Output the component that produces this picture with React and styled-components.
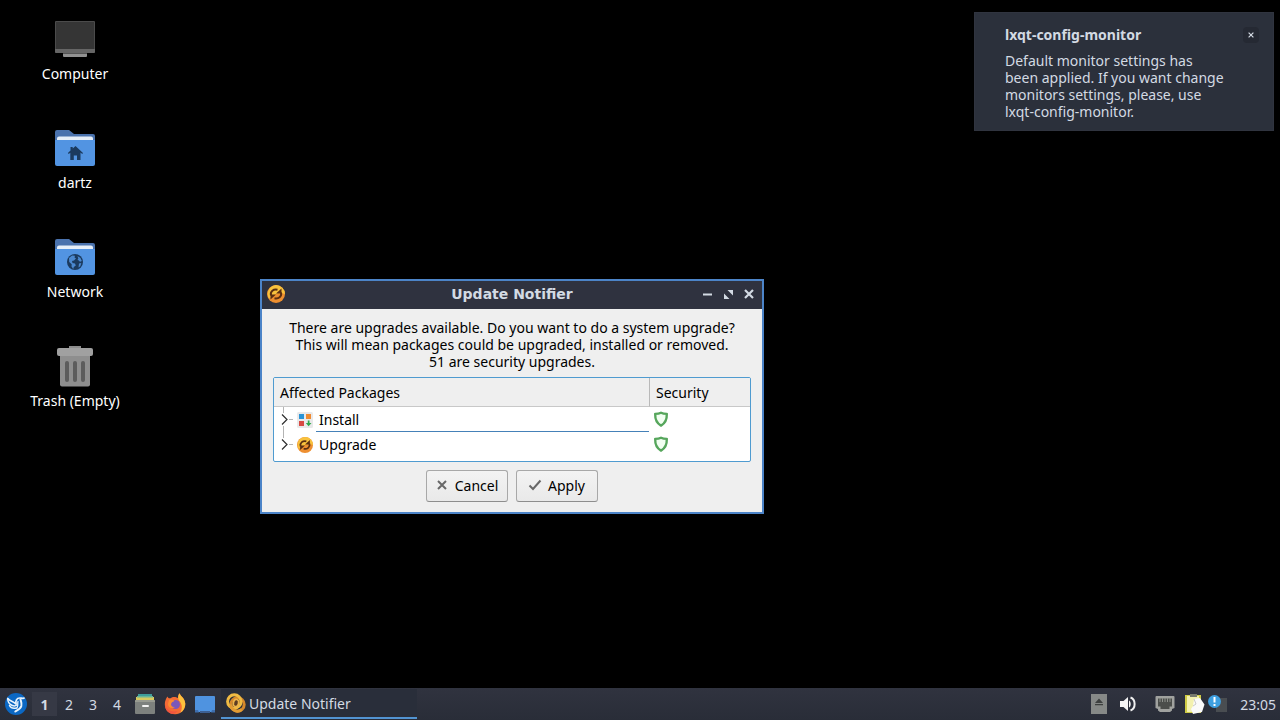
import React from "react";
import styled, { createGlobalStyle } from "styled-components";

const Global = createGlobalStyle`
  * { box-sizing: border-box; }
  body {
    margin: 0;
    background: #000;
    font-family: "Noto Sans", "Open Sans", sans-serif;
    font-size: 14px;
    line-height: 17px;
    color: #000;
  }
  button { font: inherit; color: inherit; margin: 0; cursor: default; }
`;

const Screen = styled.div`
  display: flex;
  flex-direction: column;
  min-height: 100vh;
`;

const Desktop = styled.main`
  position: relative;
  flex: 1;
`;

const Shortcuts = styled.nav`
  display: flex;
  flex-direction: column;
  width: 150px;
  padding-top: 16px;
`;

const Shortcut = styled.a`
  display: flex;
  flex-direction: column;
  align-items: center;
  gap: 1px;
  height: 109px;
  color: #fff;
  text-decoration: none;
  svg { width: 48px; height: 48px; }
`;

const Notification = styled.aside`
  position: absolute;
  top: 12px;
  right: 6px;
  width: 300px;
  padding: 13px 14px 10px 30px;
  background: #2b303b;
  border: 1px solid #30343f;
  color: #d3dae3;
`;

const NoticeHead = styled.header`
  display: flex;
  align-items: center;
  justify-content: space-between;
  margin-bottom: 9px;
`;

const NoticeTitle = styled.h2`
  margin: 0;
  font-size: 14px;
`;

const NoticeClose = styled.button`
  display: grid;
  place-items: center;
  width: 16px;
  height: 16px;
  padding: 0;
  border: 0;
  border-radius: 4px;
  background: #252933;
`;

const NoticeText = styled.p`
  margin: 0;
`;

const Window = styled.section`
  position: absolute;
  top: 279px;
  left: 260px;
  width: 504px;
  border: 2px solid #4c84c8;
  background: #efefef;
`;

const TitleBar = styled.header`
  display: grid;
  grid-template-columns: 80px 1fr 80px;
  align-items: center;
  height: 28px;
  padding: 0 5px 2px;
  background: #2f323f;
  color: #d3dae3;
`;

const WindowTitle = styled.h1`
  margin: 0;
  text-align: center;
  font-family: "DejaVu Sans", sans-serif;
  font-size: 14px;
  line-height: 20px;
`;

const WindowControls = styled.div`
  display: flex;
  justify-content: flex-end;
  gap: 5px;
`;

const WindowButton = styled.button`
  display: grid;
  place-items: center;
  width: 16px;
  height: 16px;
  padding: 0;
  border: 0;
  background: none;
`;

const WindowBody = styled.div`
  padding: 10px 11px;
`;

const Message = styled.p`
  margin: 0 0 7px;
  text-align: center;
`;

const TreeFrame = styled.div`
  padding-bottom: 4px;
  border: 1px solid #4f9bd0;
  border-radius: 2px;
  background: #fff;
  overflow: hidden;
`;

const Tree = styled.table`
  width: 100%;
  table-layout: fixed;
  border-collapse: separate;
  border-spacing: 0;
  text-align: left;
`;

const HeadCell = styled.th`
  height: 29px;
  width: ${(p) => p.$width || "auto"};
  padding: 0 6px;
  border-bottom: 1px solid #c8c8c8;
  border-left: ${(p) => (p.$divided ? "1px solid #b9b9b9" : "0")};
  background: #efefef;
  font-weight: 400;
`;

const Cell = styled.td`
  height: 25px;
  padding: 0 0 0 4px;
`;

const TreeItem = styled.div`
  display: flex;
  align-items: center;
  height: 25px;
  svg { display: block; }
`;

const Status = styled.div`
  height: 25px;
  padding-top: 4px;
  svg { display: block; }
`;

const Expander = styled.button`
  width: 17px;
  height: 25px;
  padding: 0;
  border: 0;
  background: none;
  margin-right: 2px;
`;

const ItemLabel = styled.span`
  flex: 1;
  height: 25px;
  margin-left: 3px;
  padding-left: 3px;
  line-height: 25px;
  border-bottom: 1px solid ${(p) => (p.$current ? "#4581b8" : "transparent")};
`;

const Actions = styled.div`
  display: flex;
  justify-content: center;
  gap: 8px;
  margin-top: 8px;
`;

const ActionButton = styled.button`
  display: flex;
  align-items: center;
  justify-content: center;
  gap: 5px;
  width: 82px;
  height: 32px;
  padding: 0 2px 2px 0;
  border: 1px solid #a8a8a8;
  border-bottom-color: #8e8e8e;
  border-radius: 3px;
  background: linear-gradient(#f3f3f3, #e9e9e9);
`;

const Glyph = styled.span`
  display: grid;
  place-items: center;
  width: 16px;
  height: 16px;
  color: #686868;
`;

const Taskbar = styled.footer`
  display: flex;
  align-items: center;
  height: 32px;
  padding: 0 4px;
  background: linear-gradient(#30333f, #292d38);
  color: #d3dae3;
`;

const PanelButton = styled.button`
  display: grid;
  place-items: center;
  width: ${(p) => p.$width || "30px"};
  height: 32px;
  padding: 0;
  border: 0;
  background: none;
`;

const Workspaces = styled.div`
  display: flex;
  margin: 0 1px 0 4px;
`;

const Workspace = styled.button`
  width: ${(p) => (p.$active ? "25px" : "24px")};
  height: 24px;
  padding: 0;
  border: 0;
  background: ${(p) => (p.$active ? "#363945" : "none")};
  font-weight: ${(p) => (p.$active ? 700 : 400)};
`;

const Task = styled.button`
  display: flex;
  align-items: center;
  gap: 3px;
  width: 196px;
  height: 30px;
  margin-left: 1px;
  padding: 0 5px;
  border: 0;
  border-bottom: 2px solid #5294d2;
  background: #292e3a;
`;

const Tray = styled.div`
  display: flex;
  align-items: center;
  margin-left: auto;
`;

const Clock = styled.time`
  margin-left: 7px;
`;

const ComputerIcon = () => (
  <svg viewBox="0 0 48 48" aria-hidden="true">
    <rect x="4" y="5" width="40" height="32" rx="1" fill="#4b4b4b" />
    <rect x="5" y="6" width="38" height="27" fill="#353535" />
    <path d="M4 33h40v2.500a1.500 1.500 0 0 1-1.500 1.500h-37A1.500 1.500 0 0 1 4 35.500z" fill="#666" />
    <rect x="12" y="37" width="24" height="4" rx="1" fill="#919191" />
    <rect x="12" y="37" width="24" height="1" fill="#555" />
  </svg>
);

const FolderIcon = ({ children }) => (
  <svg viewBox="0 0 48 48" aria-hidden="true">
    <path d="M4 7a2 2 0 0 1 2-2h12l5 4h19a2 2 0 0 1 2 2v8H4z" fill="#4a72ad" />
    <path d="M6 13.500a2 2 0 0 1 2-2h32a2 2 0 0 1 2 2V18H6z" fill="#e6eef8" />
    <path d="M4 15h40v24a2 2 0 0 1-2 2H6a2 2 0 0 1-2-2z" fill="#5294e2" />
    {children}
  </svg>
);

const HouseGlyph = () => (
  <path d="M24.500 21l7.500 7-.8 1-1.700-1.400V35h-3.500v-4.500h-3.200V35h-3.500v-7.200L17.700 29l-.8-1 2.600-2.500V22h2.200v1.500z" fill="#1b3a5e" />
);

const GlobeGlyph = () => (
  <g>
    <circle cx="24" cy="28" r="8" fill="#1b3a5e" />
    <path d="M18 24l3-2.500 3 .3-.5 1.700 1.500 1-2 2-2 .5.500 2 2.500.5.800 2-2 1.500-.6 2-1.700-2.500.2-2.300-2.500-2.200zM26.500 22l3 2 1.300 3-1.800.8-1.500-1.600-1-.3.800-1.500zM28 29.500l2.300-.5-1 3.200-1.800 1.300z" fill="#4b88cf" />
  </g>
);

const TrashIcon = () => (
  <svg viewBox="0 0 48 48" aria-hidden="true">
    <path d="M18 3h12v3H18z" fill="#8c8c8c" />
    <path d="M9 12h30v29.500a2 2 0 0 1-2 2H11a2 2 0 0 1-2-2z" fill="#8e8e8e" />
    <path d="M8 5h32a2 2 0 0 1 2 2v4a2 2 0 0 1-2 2H8a2 2 0 0 1-2-2V7a2 2 0 0 1 2-2z" fill="#a0a0a0" />
    <path d="M16 20v17M24 20v17M32 20v17" stroke="#5c5c5c" strokeWidth="4" strokeLinecap="round" />
  </svg>
);

const UpdateIcon = ({ size }) => (
  <svg width={size} height={size} viewBox="0 0 18 18" aria-hidden="true">
    <circle cx="9" cy="9" r="9" fill="#ee8f30" />
    <path d="M9 0a9 9 0 0 1 9 9c-4-2-12 0-16 4.700A9 9 0 0 1 9 0z" fill="#f8c23d" />
    <path d="M4 10.500C3 6.500 6.500 3.800 10.500 4.800" stroke="#5a2f12" strokeWidth="2" fill="none" />
    <path d="M14 7.500c1 4-2.500 6.700-6.500 5.700" stroke="#5a2f12" strokeWidth="2" fill="none" />
    <path d="M14.500 3.500v5H9zM3.500 14.500v-5H9z" fill="#5a2f12" />
  </svg>
);

const UpdateTaskIcon = () => (
  <svg width="20" height="20" viewBox="0 0 20 20" aria-hidden="true" fill="none">
    <circle cx="11.500" cy="11.500" r="6.700" stroke="#d5882c" strokeWidth="3" />
    <circle cx="8.300" cy="8.500" r="6.700" stroke="#f0bb43" strokeWidth="3" />
    <path d="M4.800 11.500a6.700 6.700 0 0 0 11 5" stroke="#e29b33" strokeWidth="3" />
    <ellipse cx="10" cy="10" rx="2.600" ry="3.600" transform="rotate(15 10 10)" stroke="#eeb44a" strokeWidth="1.700" fill="#5d3c22" />
  </svg>
);

const InstallIcon = () => (
  <svg width="16" height="16" viewBox="0 0 16 16" aria-hidden="true">
    <rect width="16" height="16" rx="1.500" fill="#e9e9ea" />
    <path d="M2 2h5v5H2z" fill="#2a94d6" />
    <path d="M9 2h5v5H9z" fill="#f08b32" />
    <path d="M2 9h5v5H2z" fill="#d84a43" />
    <path d="M10.800 8.500h1.700V11H14.500l-2.900 3.200L8.800 11h2z" fill="#2fa84b" />
  </svg>
);

const ShieldIcon = () => (
  <svg width="16" height="16" viewBox="0 0 16 16" aria-hidden="true">
    <path d="M8 1.700c1.700.9 3.500 1.200 5.800 1.200.2 5.300-1.400 9.300-5.800 11.700C3.600 12.200 2 8.200 2.200 2.900 4.500 2.900 6.300 2.600 8 1.700z" fill="#f2fff2" stroke="#56a65c" strokeWidth="2.400" strokeLinejoin="round" />
  </svg>
);

const BranchIcon = ({ last }) => (
  <svg width="17" height="25" viewBox="0 0 17 25" fill="none" aria-hidden="true">
    <path d={last ? "M5.500 0v6M11 12.500h4" : "M5.500 0v6M5.500 19v6M11 12.500h4"} stroke="#b4b4b4" />
    <path d="M4 7.500l5 5-5 5" stroke="#2e2e2e" strokeWidth="1.200" />
  </svg>
);

const CrossIcon = ({ size, width }) => (
  <svg width={size} height={size} viewBox="0 0 10 10" fill="none" aria-hidden="true">
    <path d="M1 1l8 8M9 1l-8 8" stroke="currentColor" strokeWidth={width} />
  </svg>
);

const BirdIcon = () => (
  <svg width="22" height="22" viewBox="0 0 22 22" aria-hidden="true">
    <circle cx="11" cy="11" r="11" fill="#0b68c4" />
    <g fill="none" stroke="#e8f3fc" strokeLinecap="round" strokeLinejoin="round">
      <path d="M2.800 5.500c1.500 2.200 4.500 2.700 8.300 5.500-.8-3 .5-6 3.700-6 1.500 0 2.200.5 4.200.2" strokeWidth="1.700" />
      <path d="M2.800 6c0 3.500 2 5.500 4.500 6.500 2 .8 3.700.2 4.500-.5" strokeWidth="1.500" />
      <path d="M4.500 12.500c1.300 2.600 4 3.300 7 2.500" strokeWidth="1.500" />
      <path d="M15.500 6.500c.5 2 1.500 3.500.8 6.500-.8 3-3.600 4-6 5.500" strokeWidth="2" />
      <path d="M13 8.500c-.7 2 .5 4-1 6.500" strokeWidth="1.300" />
    </g>
  </svg>
);

const FilesIcon = () => (
  <svg width="22" height="22" viewBox="0 0 22 22" aria-hidden="true">
    <path d="M4 1h14v4H4z" fill="#3f9e9b" />
    <path d="M2 4h18v6H2z" fill="#d9c95f" />
    <path d="M3 3h16v1.500H3z" fill="#68b69a" />
    <rect x="1" y="7" width="20" height="14" rx="1" fill="#7d817e" />
    <path d="M1 8a1 1 0 0 1 1-1h18a1 1 0 0 1 1 1v1H1z" fill="#989b91" />
    <rect x="8" y="12" width="7" height="2" rx="1" fill="#f3f3f3" />
  </svg>
);

const FirefoxIcon = () => (
  <svg width="22" height="22" viewBox="0 0 22 22" aria-hidden="true">
    <path d="M3.500 3.500C4 5 5 5.500 6.500 5.300 9 3 12 4 14 5c0-2 .3-3.500 1.500-4.800 1 3 5.600 5 5.800 10.600.2 6-4.400 10.500-10.200 10.500C5 21.300.8 17 .8 11.300c0-3.300 1.200-5.800 2.700-7.800z" fill="#f36b35" />
    <path d="M15.500.2c1 3 5.600 5 5.800 10.600.1 4-2 7.200-5 9 2.200-4 2-8.500-.6-11.300C14 6.500 13.500 3.300 15.500.2z" fill="#fdc13d" />
    <path d="M1 11c1.500 6 6.500 8.500 12.500 7-2 2.500-5 3.500-7 2.500C3 19 .8 15.500 1 11z" fill="#f0563f" />
    <circle cx="11.500" cy="11.500" r="4.500" fill="#7b58b9" />
    <path d="M5 7c2-.8 4-.3 5.500.7-1 1.300-3 .8-3.300 2.800C6.500 12.500 8 14.500 11 14c-3 2.500-7 .5-7-3z" fill="#fb8b32" />
  </svg>
);

const ShowDesktopIcon = () => (
  <svg width="22" height="22" viewBox="0 0 22 22" aria-hidden="true">
    <rect x="1" y="3" width="20" height="16" rx="1" fill="#4f93e0" />
    <path d="M1 17h3l1 2.500H1zM21 17h-3l-1 2.500h4z" fill="#3f6ead" />
    <rect x="6" y="18" width="10" height="2" fill="#3d5f92" />
  </svg>
);

const EjectIcon = () => (
  <svg width="16" height="20" viewBox="0 0 16 20" aria-hidden="true">
    <rect width="16" height="20" fill="#868987" />
    <path d="M8 4.500l4 4.500H4zM4 10h8v1.300H4z" fill="#3d403f" />
  </svg>
);

const VolumeIcon = () => (
  <svg width="18" height="16" viewBox="0 0 18 16" aria-hidden="true">
    <path d="M1 5h3.500L9 1v14l-4.500-4H1z" fill="#f6f6f6" />
    <path d="M10 4.500c2.300 1 2.300 6 0 7z" fill="#f6f6f6" />
    <path d="M11.500 1.500c5.500 2 5.500 11 0 13" stroke="#f0f0f0" strokeWidth="2" fill="none" />
  </svg>
);

const EthernetIcon = () => (
  <svg width="20" height="18" viewBox="0 0 20 18" aria-hidden="true">
    <path d="M1.500 1h17a1 1 0 0 1 1 1v11l-2.500 1v1.500L15 17H5l-2-1.500V14l-2.500-1V2a1 1 0 0 1 1-1z" fill="#a0a29f" />
    <path d="M3 3.500h14v8h-2.500V14h-9v-2.500H3z" fill="#4b4e4b" />
    <path d="M5 3v4M7.500 3v4M10 3v4M12.500 3v4M15 3v4" stroke="#8d908b" strokeWidth="1" />
  </svg>
);

const ClipboardIcon = () => (
  <svg width="20" height="22" viewBox="0 0 20 22" aria-hidden="true">
    <path d="M0 2h16v18H0z" fill="#cfcb45" />
    <path d="M2 3h12v16H2z" fill="#f3f1b0" />
    <path d="M5 1h7v3H5z" fill="#777a6d" />
    <path d="M9 6l6-1 4.500 6.500L17 19l-9 2-2-5 2-3z" fill="#fafafa" />
    <path d="M9 6l2 5-3 2" stroke="#c9c9c9" fill="none" />
  </svg>
);

const AlertIcon = () => (
  <svg width="20" height="18" viewBox="0 0 20 18" aria-hidden="true">
    <path d="M8 3h11v14H8z" fill="#494d51" />
    <circle cx="6.500" cy="6.500" r="6.500" fill="#3e9fe0" />
    <path d="M5.500 2h2v5.500h-2zM5.500 9h2v2h-2z" fill="#fff" />
  </svg>
);

const shortcuts = [
  { name: "Computer", icon: <ComputerIcon /> },
  { name: "dartz", icon: <FolderIcon><HouseGlyph /></FolderIcon> },
  { name: "Network", icon: <FolderIcon><GlobeGlyph /></FolderIcon> },
  { name: "Trash (Empty)", icon: <TrashIcon /> },
];

const groups = [
  { name: "Install", icon: <InstallIcon />, current: true },
  { name: "Upgrade", icon: <UpdateIcon size={16} /> },
];

export default function App() {
  return (
    <Screen>
      <Global />
      <Desktop>
        <Shortcuts aria-label="Desktop">
          {shortcuts.map((s) => (
            <Shortcut key={s.name} href="#">
              {s.icon}
              <span>{s.name}</span>
            </Shortcut>
          ))}
        </Shortcuts>

        <Notification>
          <NoticeHead>
            <NoticeTitle>lxqt-config-monitor</NoticeTitle>
            <NoticeClose aria-label="Dismiss"><CrossIcon size={6} width={2} /></NoticeClose>
          </NoticeHead>
          <NoticeText>
            Default monitor settings has<br />
            been applied. If you want change<br />
            monitors settings, please, use<br />
            lxqt-config-monitor.
          </NoticeText>
        </Notification>

        <Window aria-labelledby="window-title">
          <TitleBar>
            <UpdateIcon size={18} />
            <WindowTitle id="window-title">Update Notifier</WindowTitle>
            <WindowControls>
              <WindowButton aria-label="Minimize">
                <svg width="9" height="9" viewBox="0 0 9 9"><path d="M0 3.500h9v2H0z" fill="currentColor" /></svg>
              </WindowButton>
              <WindowButton aria-label="Maximize">
                <svg width="9" height="9" viewBox="0 0 9 9"><path d="M3.500 0H9v5.500zM0 3.500L5.500 9H0z" fill="currentColor" /></svg>
              </WindowButton>
              <WindowButton aria-label="Close"><CrossIcon size={10} width={2.2} /></WindowButton>
            </WindowControls>
          </TitleBar>
          <WindowBody>
            <Message>
              There are upgrades available. Do you want to do a system upgrade?<br />
              This will mean packages could be upgraded, installed or removed.<br />
              51 are security upgrades.
            </Message>
            <TreeFrame>
              <Tree>
                <thead>
                  <tr>
                    <HeadCell scope="col">Affected Packages</HeadCell>
                    <HeadCell scope="col" $width="101px" $divided>Security</HeadCell>
                  </tr>
                </thead>
                <tbody>
                  {groups.map((g, i) => (
                    <tr key={g.name}>
                      <Cell>
                        <TreeItem>
                          <Expander aria-label={"Expand " + g.name}>
                            <BranchIcon last={i === groups.length - 1} />
                          </Expander>
                          {g.icon}
                          <ItemLabel $current={g.current}>{g.name}</ItemLabel>
                        </TreeItem>
                      </Cell>
                      <Cell><Status><ShieldIcon /></Status></Cell>
                    </tr>
                  ))}
                </tbody>
              </Tree>
            </TreeFrame>
            <Actions>
              <ActionButton>
                <Glyph><CrossIcon size={10} width={2} /></Glyph>
                Cancel
              </ActionButton>
              <ActionButton>
                <Glyph>
                  <svg width="14" height="12" viewBox="0 0 14 12" fill="none" aria-hidden="true">
                    <path d="M1.500 6.500l3.500 3.500L12.500 1.500" stroke="currentColor" strokeWidth="2" />
                  </svg>
                </Glyph>
                Apply
              </ActionButton>
            </Actions>
          </WindowBody>
        </Window>
      </Desktop>

      <Taskbar>
        <PanelButton $width="24px" aria-label="Menu"><BirdIcon /></PanelButton>
        <Workspaces>
          {["1", "2", "3", "4"].map((n) => (
            <Workspace key={n} $active={n === "1"}>{n}</Workspace>
          ))}
        </Workspaces>
        <PanelButton aria-label="Files"><FilesIcon /></PanelButton>
        <PanelButton aria-label="Firefox"><FirefoxIcon /></PanelButton>
        <PanelButton aria-label="Show desktop"><ShowDesktopIcon /></PanelButton>
        <Task><UpdateTaskIcon />Update Notifier</Task>
        <Tray>
          <PanelButton $width="24px" aria-label="Removable media"><EjectIcon /></PanelButton>
          <PanelButton $width="34px" aria-label="Volume"><VolumeIcon /></PanelButton>
          <PanelButton $width="40px" aria-label="Network"><EthernetIcon /></PanelButton>
          <PanelButton $width="18px" aria-label="Clipboard"><ClipboardIcon /></PanelButton>
          <PanelButton $width="30px" aria-label="Updates"><AlertIcon /></PanelButton>
          <Clock>23:05</Clock>
        </Tray>
      </Taskbar>
    </Screen>
  );
}
